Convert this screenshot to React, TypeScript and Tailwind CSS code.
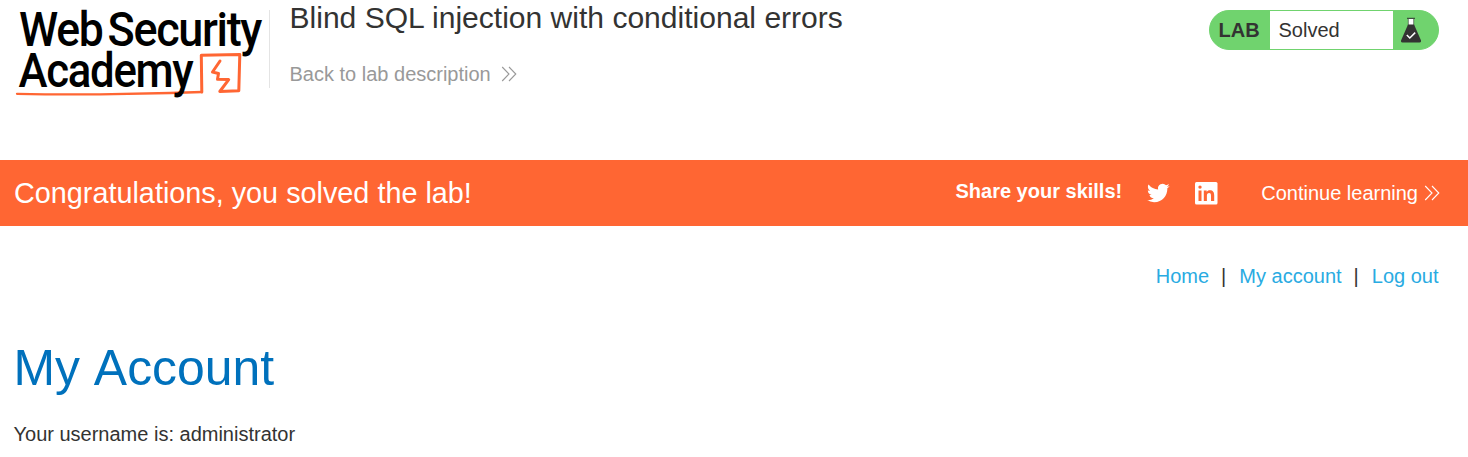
import React from "react";

function Chevrons({ className }: { className: string }) {
  return (
    <svg viewBox="0 0 16 16" className={className} fill="none" stroke="currentColor" strokeWidth="1.1">
      <path d="M1.2 1 8 8 1.2 15M8 1 14.8 8 8 15" />
    </svg>
  );
}

function Logo() {
  return (
    <svg viewBox="0 0 269 104" className="h-[104px] w-[269px] shrink-0 overflow-visible" aria-label="Web Security Academy">
      <g fill="none" stroke="#ff6633" strokeLinejoin="round" strokeLinecap="round">
        <path strokeWidth="2.3" d="M17 93.800 45 94.300 100 94.400 170 93 202 92" />
        <path strokeWidth="3" d="M201.800 92 201.300 55.300 239.800 54.600 238.800 90.800 219.800 91.500 228.700 79.600 217.500 79.200 218.500 73.500 212.500 72 220 61" />
      </g>
      <g fill="#000" className="font-['Roboto'] font-medium" fontSize="47.5" letterSpacing="-1.4">
        <text x="19" y="45.700" textLength="83.500" lengthAdjust="spacingAndGlyphs">Web</text>
        <text x="107.500" y="45.700" textLength="153.500" lengthAdjust="spacingAndGlyphs">Security</text>
        <text x="18.500" y="87" textLength="174" lengthAdjust="spacingAndGlyphs">Academy</text>
      </g>
    </svg>
  );
}

function Flask() {
  return (
    <svg viewBox="0 0 20 26" className="ml-[8px] h-[26px] w-[20px]">
      <path d="M7.3 2v7h5.400V2" fill="#fff" stroke="#333332" strokeWidth=".6" />
      <path d="M6 1.300h8" stroke="#333332" strokeWidth="1" />
      <path d="M7 7.500h6l7 16q.3 2-1.500 2h-17Q-.3 25.500 0 23.500z" fill="#333332" />
      <path d="m5.800 18 3 3 5.400-5.400" fill="none" stroke="#fff" strokeWidth="1.500" />
    </svg>
  );
}

export default function App() {
  return (
    <div className="h-[457px] w-full overflow-hidden bg-white font-['Liberation_Sans',Arial,sans-serif] text-[20px] leading-[24px] text-[#333332]">
      <header className="flex h-[160px] items-start">
        <Logo />
        <div className="mt-[10px] h-[78px] w-px bg-[#e4e4e4]" />
        <div className="ml-[19.500px] flex flex-1 flex-col items-start">
          <h2 className="text-[30.050px] leading-[35px]">Blind SQL injection with conditional errors</h2>
          <a className="mt-[27px] flex items-center text-[#999999]">
            Back to lab description
            <Chevrons className="ml-[10px] h-4 w-4" />
          </a>
        </div>
        <div className="mt-[10px] mr-[29px] flex h-[40px] w-[230px] overflow-hidden rounded-[20px] border border-[#70d36e] bg-[#70d36e]">
          <p className="flex w-[60px] items-center pl-[8.500px] font-bold">LAB</p>
          <p className="flex w-[123px] items-center bg-white pl-[8.500px]">Solved</p>
          <div className="flex items-center">
            <Flask />
          </div>
        </div>
      </header>
      <section className="flex h-[66px] items-center bg-[#ff6633] pr-[28px] pl-[14px] text-white">
        <h4 className="flex-1 text-[28.800px] leading-[34px]">Congratulations, you solved the lab!</h4>
        <span className="-mt-1 mr-[24px] font-bold">Share your skills!</span>
        <svg viewBox="0 0 24 24" className="mr-[24px] h-6 w-6" fill="currentColor">
          <path d="M23.643 4.937c-.835.37-1.732.62-2.675.733a4.670 4.670 0 0 0 2.048-2.578 9.300 9.300 0 0 1-2.958 1.130 4.660 4.660 0 0 0-7.938 4.250 13.229 13.229 0 0 1-9.602-4.868c-.4.690-.630 1.490-.630 2.342A4.660 4.660 0 0 0 3.960 9.824a4.647 4.647 0 0 1-2.110-.583v.060a4.660 4.660 0 0 0 3.737 4.568 4.692 4.692 0 0 1-2.104.080 4.661 4.661 0 0 0 4.352 3.234 9.348 9.348 0 0 1-5.786 1.995 9.500 9.500 0 0 1-1.112-.065 13.175 13.175 0 0 0 7.140 2.093c8.570 0 13.255-7.098 13.255-13.254 0-.200-.005-.402-.014-.602a9.470 9.470 0 0 0 2.323-2.410z" />
        </svg>
        <svg viewBox="0 0 24 24" className="mr-[43px] h-6 w-6">
          <rect x="1" y="1" width="22.500" height="22.500" rx="1.500" fill="#fff" />
          <g fill="#ff6633">
            <circle cx="6" cy="6.100" r="1.700" />
            <path d="M4.500 9.500h3v10.400h-3zM9.800 9.500h2.900v1.400c.6-1 1.700-1.700 3.100-1.700 3.200 0 4.400 2 4.400 5v5.700h-3.200v-5c0-1.600-.3-2.800-1.900-2.800s-2.200 1.200-2.200 2.700v5.100H9.800z" />
          </g>
        </svg>
        <a className="flex items-center">
          Continue learning
          <Chevrons className="ml-[6px] h-4 w-4" />
        </a>
      </section>
      <nav className="mt-[38px] flex justify-end pr-[29.500px] text-[#29abe2]">
        <a>Home</a>
        <span className="mr-[13px] ml-[12px] text-[#333332]">|</span>
        <a>My account</a>
        <span className="mr-[13px] ml-[12px] text-[#333332]">|</span>
        <a>Log out</a>
      </nav>
      <main className="pl-[13.500px]">
        <h1 className="mt-[50px] text-[49.900px] leading-[60px] text-[#0071bc] [font-kerning:none]">My Account</h1>
        <p className="mt-[24px]">Your username is: administrator</p>
      </main>
    </div>
  );
}
